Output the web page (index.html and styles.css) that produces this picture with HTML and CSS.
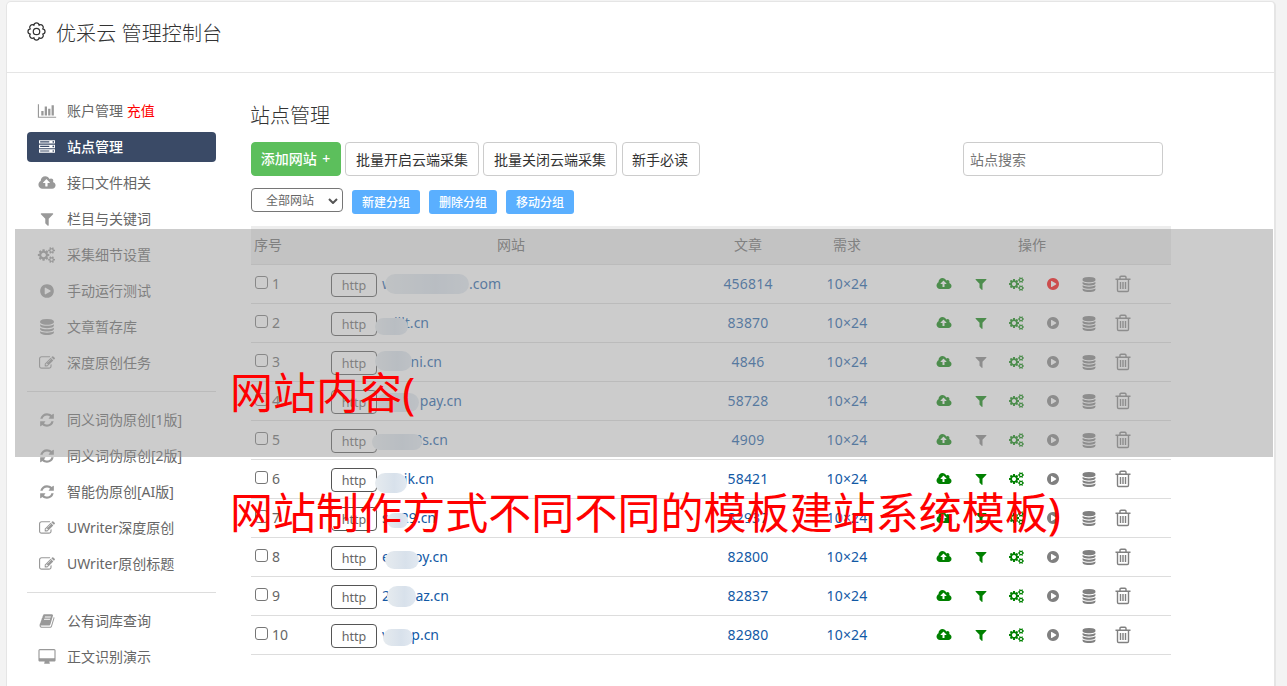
FILE: index.html
```html
<!DOCTYPE html>
<html lang="zh-CN">
<head>
  <meta charset="UTF-8">
  <meta name="viewport" content="width=device-width, initial-scale=1.0">
  <title>优采云 管理控制台</title>
  <link rel="stylesheet" href="styles.css">
</head>
<body>

  <svg class="sprite">
    <symbol id="i-chart" viewBox="0 0 2048 1792"><path d="M640 896v512h-256v-512h256zm384-512v1024h-256v-1024h256zm1024 1152v128h-2048v-1536h128v1408h1920zm-640-896v768h-256v-768h256zm384-384v1152h-256v-1152h256z"/></symbol>
    <symbol id="i-server" viewBox="0 0 1792 1792"><path d="M128 1408h1024v-128h-1024v128zm0-512h1024v-128h-1024v128zm1568 448q0-40-28-68t-68-28-68 28-28 68 28 68 68 28 68-28 28-68zm-1568-960h1024v-128h-1024v128zm1568 448q0-40-28-68t-68-28-68 28-28 68 28 68 68 28 68-28 28-68zm0-512q0-40-28-68t-68-28-68 28-28 68 28 68 68 28 68-28 28-68zm96 832v384h-1792v-384h1792zm0-512v384h-1792v-384h1792zm0-512v384h-1792v-384h1792z"/></symbol>
    <symbol id="i-upload" viewBox="0 0 1920 1792"><path d="M1280 864q0-14-9-23l-352-352q-9-9-23-9t-23 9l-351 351q-10 12-10 24 0 14 9 23t23 9h224v352q0 13 9.5 22.5t22.5 9.5h192q13 0 22.5-9.5t9.5-22.5v-352h224q13 0 22.5-9.5t9.5-22.5zm640 288q0 159-112.5 271.5t-271.5 112.5h-1088q-185 0-316.5-131.5t-131.5-316.5q0-130 70-240t188-165q-2-30-2-43 0-212 150-362t362-150q156 0 285.5 87t188.5 231q71-62 166-62 106 0 181 75t75 181q0 76-41 138 130 31 213.5 135.5t83.5 238.5z"/></symbol>
    <symbol id="i-filter" viewBox="0 0 1792 1792"><path d="M1595 295q17 41-14 70l-493 493v742q0 42-39 59-13 5-25 5-27 0-45-19l-256-256q-19-19-19-45v-486l-493-493q-31-29-14-70 17-39 59-39h1280q42 0 59 39z"/></symbol>
    <symbol id="i-cogs" viewBox="0 0 1920 1792"><path d="M832 896q0-106-75-181t-181-75-181 75-75 181 75 181 181 75 181-75 75-181zm768 512q0-52-38-90t-90-38-90 38-38 90q0 53 37.5 90.5t90.5 37.5 90.5-37.5 37.5-90.5zm0-1024q0-52-38-90t-90-38-90 38-38 90q0 53 37.5 90.5t90.5 37.5 90.5-37.5 37.5-90.5zm-384 421v185q0 10-7 19.5t-16 10.5l-155 24q-11 35-32 76 34 48 90 115 7 11 7 20 0 12-7 19-23 30-82.5 89.5t-78.5 59.5q-11 0-21-7l-115-90q-37 19-77 31-11 108-23 155-7 24-30 24h-186q-11 0-20-7.5t-10-17.5l-23-153q-34-10-75-31l-118 89q-7 7-20 7-11 0-21-8-144-133-144-160 0-9 7-19 10-14 41-53t47-61q-23-44-35-82l-152-24q-10-1-17-9.5t-7-19.5v-185q0-10 7-19.5t16-10.5l155-24q11-35 32-76-34-48-90-115-7-11-7-20 0-12 7-20 22-30 82-89t79-59q11 0 21 7l115 90q34-18 77-32 11-108 23-154 7-24 30-24h186q11 0 20 7.5t10 17.5l23 153q34 10 75 31l118-89q8-7 20-7 11 0 21 8 144 133 144 160 0 8-7 19-12 16-42 54t-45 60q23 48 34 82l152 23q10 2 17 10.5t7 19.5zm640 533v140q0 16-149 31-12 27-30 52 51 113 51 138 0 4-4 7-122 71-124 71-8 0-46-47t-52-68q-20 2-30 2t-30-2q-14 21-52 68t-46 47q-2 0-124-71-4-3-4-7 0-25 51-138-18-25-30-52-149-15-149-31v-140q0-16 149-31 13-29 30-52-51-113-51-138 0-4 4-7 4-2 35-20t59-34 30-16q8 0 46 46.5t52 67.5q20-2 30-2t30 2q51-71 92-112l6-2q4 0 124 70 4 3 4 7 0 25-51 138 17 23 30 52 149 15 149 31zm0-1024v140q0 16-149 31-12 27-30 52 51 113 51 138 0 4-4 7-122 71-124 71-8 0-46-47t-52-68q-20 2-30 2t-30-2q-14 21-52 68t-46 47q-2 0-124-71-4-3-4-7 0-25 51-138-18-25-30-52-149-15-149-31v-140q0-16 149-31 13-29 30-52-51-113-51-138 0-4 4-7 4-2 35-20t59-34 30-16q8 0 46 46.5t52 67.5q20-2 30-2t30 2q51-71 92-112l6-2q4 0 124 70 4 3 4 7 0 25-51 138 17 23 30 52 149 15 149 31z"/></symbol>
    <symbol id="i-play" viewBox="0 0 1792 1792"><path d="M896 128q209 0 385.5 103t279.5 279.5 103 385.5-103 385.5-279.5 279.5-385.5 103-385.5-103-279.5-279.5-103-385.5 103-385.5 279.5-279.5 385.5-103zm384 823q32-18 32-55t-32-55l-544-320q-31-19-64-1-32 19-32 56v640q0 37 32 56 16 8 32 8 17 0 32-9z"/></symbol>
    <symbol id="i-database" viewBox="0 0 1792 1792"><path d="M896 768q237 0 443-43t325-127v170q0 69-103 128t-280 93.5-385 34.5-385-34.5-280-93.5-103-128v-170q119 84 325 127t443 43zm0 768q237 0 443-43t325-127v170q0 69-103 128t-280 93.5-385 34.5-385-34.5-280-93.5-103-128v-170q119 84 325 127t443 43zm0-384q237 0 443-43t325-127v170q0 69-103 128t-280 93.5-385 34.5-385-34.5-280-93.5-103-128v-170q119 84 325 127t443 43zm0-1152q208 0 385 34.5t280 93.5 103 128v128q0 69-103 128t-280 93.5-385 34.5-385-34.5-280-93.5-103-128v-128q0-69 103-128t280-93.5 385-34.5z"/></symbol>
    <symbol id="i-edit" viewBox="0 0 1792 1792"><path d="M888 1184l116-116-152-152-116 116v56h96v96h56zm440-720q-16-16-33 1l-350 350q-17 17-1 33t33-1l350-350q17-17 1-33zm80 594v190q0 119-84.5 203.5t-203.5 84.5h-832q-119 0-203.5-84.5t-84.5-203.5v-832q0-119 84.5-203.5t203.5-84.5h832q63 0 117 25 15 7 18 23 3 17-9 29l-49 49q-14 14-32 8-23-6-45-6h-832q-66 0-113 47t-47 113v832q0 66 47 113t113 47h832q66 0 113-47t47-113v-126q0-13 9-22l64-64q15-15 35-7t20 29zm-96-738l288 288-672 672h-288v-288zm444 132l-92 92-288-288 92-92q28-28 68-28t68 28l152 152q28 28 28 68t-28 68z"/></symbol>
    <symbol id="i-refresh" viewBox="0 0 1792 1792"><path d="M1639 1056q0 5-1 7-64 268-268 434.5t-478 166.5q-146 0-282.5-55t-243.5-157l-129 129q-19 19-45 19t-45-19-19-45v-448q0-26 19-45t45-19h448q26 0 45 19t19 45-19 45l-137 137q71 66 161 102t187 36q134 0 250-65t186-179q11-17 53-117 8-23 30-23h192q13 0 22.5 9.5t9.5 22.5zm25-800v448q0 26-19 45t-45 19h-448q-26 0-45-19t-19-45 19-45l138-138q-148-137-349-137-134 0-250 65t-186 179q-11 17-53 117-8 23-30 23h-199q-13 0-22.5-9.5t-9.5-22.5v-7q65-268 270-434.5t480-166.5q146 0 284 55.5t245 156.5l130-129q19-19 45-19t45 19 19 45z"/></symbol>
    <symbol id="i-book" viewBox="0 0 1792 1792"><path d="M1703 478q40 57 18 129l-275 906q-19 64-76.5 107.5t-122.5 43.5h-923q-77 0-148.5-53.5t-99.5-131.5q-24-67-2-127 0-4 3-27t4-37q1-8-3-21.5t-3-19.5q2-11 8-21t16.5-23.5 16.5-23.5q23-38 45-91.5t30-91.5q3-10 .5-30t-.5-28q3-11 17-28t17-23q21-36 42-92t25-90q1-9-2.5-32t.5-28q4-13 22-30.5t22-22.5q19-26 42.5-84.5t27.5-96.5q1-8-3-25.5t-2-26.5q2-8 9-18t18-23 17-21q8-12 16.5-30.5t15-35 16-36 19.5-32 26.5-23.5 36-11.5 47.5 5.5l-1 3q38-9 51-9h761q74 0 114 56t18 130l-274 906q-36 119-71.5 153.5t-128.5 34.5h-869q-27 0-38 15-11 16-1 43 24 70 144 70h923q29 0 56-15.5t35-41.5l300-987q7-22 5-57 38 15 59 43zm-1064 2q-4 13 2 22.5t20 9.5h608q13 0 25.5-9.5t16.5-22.5l21-64q4-13-2-22.5t-20-9.5h-608q-13 0-25.5 9.5t-16.5 22.5zm-83 256q-4 13 2 22.5t20 9.5h608q13 0 25.5-9.5t16.5-22.5l21-64q4-13-2-22.5t-20-9.5h-608q-13 0-25.5 9.5t-16.5 22.5z"/></symbol>
    <symbol id="i-desktop" viewBox="0 0 2048 1792"><path d="M1856 992v-832q0-13-9.5-22.5t-22.5-9.5h-1600q-13 0-22.5 9.5t-9.5 22.5v832q0 13 9.5 22.5t22.5 9.5h1600q13 0 22.5-9.5t9.5-22.5zm128-832v1088q0 66-47 113t-113 47h-544q0 37 16 77.5t32 71 16 43.5q0 26-19 45t-45 19h-512q-26 0-45-19t-19-45q0-14 16-44t32-70 16-78h-544q-66 0-113-47t-47-113v-1088q0-66 47-113t113-47h1600q66 0 113 47t47 113z"/></symbol>
    <symbol id="i-trash" viewBox="0 0 16 18"><path d="M.5 4.2h15M5 4V2.2Q5 1.2 6 1.2h4q1 0 1 1V4M2.5 4.5v10.8q0 1.2 1.2 1.2h8.6q1.2 0 1.2-1.2V4.5M5.5 7v7M8 7v7M10.5 7v7" fill="none" stroke="currentColor" stroke-width="1.4"/></symbol>
  </svg>

  <div class="panel">
    <header class="panel-header">
      <svg class="gear" viewBox="0 0 20 20"><path d="M16.65 12.76A2.8 2.8 0 0 1 12.76 16.65A2.8 2.8 0 0 1 7.24 16.65A2.8 2.8 0 0 1 3.35 12.76A2.8 2.8 0 0 1 3.35 7.24A2.8 2.8 0 0 1 7.24 3.35A2.8 2.8 0 0 1 12.76 3.35A2.8 2.8 0 0 1 16.65 7.24A2.8 2.8 0 0 1 16.65 12.76z"/><circle cx="10" cy="10" r="3.4"/></svg>
      <h1>优采云 管理控制台</h1>
    </header>

    <div class="panel-body">
      <nav class="sidebar">
        <a><svg><use href="#i-chart"/></svg><span>账户管理 <em>充值</em></span></a>
        <a class="active"><svg><use href="#i-server"/></svg>站点管理</a>
        <a><svg><use href="#i-upload"/></svg>接口文件相关</a>
        <a><svg><use href="#i-filter"/></svg>栏目与关键词</a>
        <a><svg><use href="#i-cogs"/></svg>采集细节设置</a>
        <a><svg><use href="#i-play"/></svg>手动运行测试</a>
        <a><svg><use href="#i-database"/></svg>文章暂存库</a>
        <a><svg><use href="#i-edit"/></svg>深度原创任务</a>
        <hr>
        <a><svg><use href="#i-refresh"/></svg>同义词伪原创[1版]</a>
        <a><svg><use href="#i-refresh"/></svg>同义词伪原创[2版]</a>
        <a><svg><use href="#i-refresh"/></svg>智能伪原创[AI版]</a>
        <a><svg><use href="#i-edit"/></svg>UWriter深度原创</a>
        <a><svg><use href="#i-edit"/></svg>UWriter原创标题</a>
        <hr>
        <a><svg><use href="#i-book"/></svg>公有词库查询</a>
        <a><svg><use href="#i-desktop"/></svg>正文识别演示</a>
      </nav>

      <main class="content">
        <h2>站点管理</h2>
        <div class="toolbar">
          <button class="btn btn-add">添加网站 +</button>
          <button class="btn btn-wide">批量开启云端采集</button>
          <button class="btn btn-wide">批量关闭云端采集</button>
          <button class="btn btn-help">新手必读</button>
          <input class="search" type="text" placeholder="站点搜索">
        </div>
        <div class="groups">
          <div class="select">全部网站<svg viewBox="0 0 10 6"><path d="M1 1l4 4 4-4"/></svg></div>
          <button class="btn-group">新建分组</button>
          <button class="btn-group">删除分组</button>
          <button class="btn-group">移动分组</button>
        </div>

        <table>
          <thead>
            <tr>
              <th class="col-no">序号</th>
              <th class="col-site">网站</th>
              <th class="col-count">文章</th>
              <th class="col-need">需求</th>
              <th class="col-ops">操作</th>
            </tr>
          </thead>
          <tbody id="sites"></tbody>
        </table>
      </main>
    </div>
  </div>

  <div class="mask"></div>
  <div class="caption caption-1">网站内容(</div>
  <div class="caption caption-2">网站制作方式不同不同的模板建站系统模板)</div>

  <script>
    // width: domain width, blur: [left, top, width, height] inside the cell
    const sites = [
      { head: 'w', tail: '.com', width: 119, count: 456814, blur: [58, 9, 84, 20], running: true },
      { head: '', tail: 'illt.cn', width: 47, count: 83870, blur: [48, 14, 33, 17] },
      { head: '', tail: 'ni.cn', width: 60, count: 4846, blur: [48, 8, 37, 20], noFilter: true },
      { head: '', tail: 'pay.cn', width: 80, count: 58728, blur: [50, 11, 42, 19] },
      { head: '', tail: '8s.cn', width: 66, count: 4909, blur: [45, 13, 50, 16], noFilter: true },
      { head: '', tail: 'ik.cn', width: 52, count: 58421, blur: [48, 13, 32, 20] },
      { head: 's', tail: '29.cn', width: 54, count: 82937, blur: [60, 14, 21, 15] },
      { head: 'e', tail: 'oy.cn', width: 66, count: 82800, blur: [58, 13, 34, 18] },
      { head: '2', tail: 'az.cn', width: 67, count: 82837, blur: [60, 9, 29, 21] },
      { head: 'v', tail: 'p.cn', width: 57, count: 82980, blur: [56, 13, 30, 17] }
    ];

    function icon(name, cls) {
      return `<svg class="${cls}"><use href="#i-${name}"/></svg>`;
    }

    document.getElementById('sites').innerHTML = sites.map((s, i) => {
      const [x, y, w, h] = s.blur;
      return `<tr>
        <td><label class="pick"><input type="checkbox">${i + 1}</label></td>
        <td><div class="site">
          <button class="btn-http">http</button>
          <a class="domain" style="width:${s.width}px"><span>${s.head}</span><span>${s.tail}</span></a>
          <i class="blur" style="left:${x}px;top:${y}px;width:${w}px;height:${h}px"></i>
        </div></td>
        <td class="num">${s.count}</td>
        <td class="num">10×24</td>
        <td><div class="ops">
          ${icon('upload', 'on')}${icon('filter', s.noFilter ? '' : 'on')}${icon('cogs', 'on')}
          ${icon('play', s.running ? 'run' : '')}${icon('database', 'db')}${icon('trash', 'trash')}
        </div></td>
      </tr>`;
    }).join('');
  </script>
</body>
</html>
```
FILE: styles.css
```css
* {
  margin: 0;
  padding: 0;
  box-sizing: border-box;
}

body {
  height: 686px;
  overflow: hidden;
  background: #f3f3f3;
  color: #666;
  font: 14px/20px "Noto Sans", "Noto Sans CJK SC", sans-serif;
}

svg {
  fill: currentColor;
}

button,
input {
  font-family: inherit;
}

.sprite {
  display: none;
}

.panel {
  height: 700px;
  margin: 1px 11px 0 6px;
  background: #fff;
  border: 1px solid #e5e5e5;
  border-right-width: 2px;
  border-radius: 5px;
}

.panel-header {
  display: flex;
  height: 71px;
  padding: 17px 20px 0;
  border-bottom: 1px solid #e5e5e5;
  color: #333;
}

.gear {
  width: 19px;
  height: 19px;
  margin: 3px 10px 0 0;
  fill: none;
  stroke: #333;
  stroke-width: 1.3;
}

h1,
h2 {
  color: #333;
  font-size: 20px;
  font-weight: 300;
  line-height: 30px;
}

h1 {
  letter-spacing: .1px;
}

h2 {
  margin-left: -1px;
}

.panel-body {
  display: flex;
  gap: 35px;
  padding: 23px 20px 0;
}

/* sidebar */
.sidebar {
  display: flex;
  flex-direction: column;
  flex: none;
  gap: 6px;
  width: 189px;
}

.sidebar a {
  display: flex;
  align-items: center;
  gap: 10px;
  height: 30px;
  padding-left: 10px;
  border-radius: 4px;
}

.sidebar svg {
  width: 20px;
  height: 16px;
  color: #999;
}

.sidebar em {
  color: #f00;
  font-style: normal;
}

.sidebar .active,
.sidebar .active svg {
  color: #fff;
}

.sidebar .active {
  background: #3a4a66;
  font-weight: 500;
}

.sidebar hr {
  height: 1px;
  margin: 7px 0;
  border: 0;
  background: #ddd;
}

/* content */
.content {
  width: 920px;
  padding-top: 5px;
}

.toolbar {
  display: flex;
  gap: 4px;
  margin-top: 11px;
}

.btn {
  height: 34px;
  border: 1px solid #ccc;
  border-radius: 4px;
  background: #fff;
  color: #333;
  font-size: 14px;
}

.btn-add {
  width: 90px;
  padding: 0 1px 2px 0;
  border-color: #5cbf5c;
  background: #5cbf5c;
  color: #fff;
  font-weight: 500;
  word-spacing: 2px;
}

.btn-wide {
  width: 134px;
}

.btn-help {
  width: 78px;
  margin-left: 1px;
  padding-right: 2px;
}

.search {
  width: 200px;
  height: 34px;
  margin: 0 8px 0 auto;
  padding: 0 6px;
  border: 1px solid #ccc;
  border-radius: 4px;
  font-size: 14px;
}

.search::placeholder {
  color: #757575;
}

.groups {
  display: flex;
  align-items: flex-end;
  gap: 9px;
  height: 38px;
}

.select {
  display: flex;
  align-items: center;
  justify-content: space-between;
  width: 92px;
  height: 24px;
  margin-bottom: 2px;
  padding: 1px 4px 0 14px;
  border: 1px solid #767676;
  border-radius: 4px;
  font-size: 12px;
}

.select svg {
  width: 10px;
  height: 6px;
  fill: none;
  stroke: #555;
  stroke-width: 2;
}

.btn-group {
  width: 68px;
  height: 24px;
  border: 0;
  border-radius: 3px;
  background: #5aafff;
  color: #fff;
  font-size: 12px;
  font-weight: 500;
}

table {
  width: 920px;
  margin-top: 12px;
  border-collapse: separate;
  border-spacing: 0;
  table-layout: fixed;
}

th,
td {
  height: 39px;
  border-bottom: 1px solid #ddd;
}

th {
  background: #ededed;
  font-weight: 400;
}

.col-no {
  width: 76px;
  padding-left: 3px;
  text-align: left;
}

.col-site {
  width: 368px;
}

.col-count {
  width: 106px;
}

.col-need {
  width: 92px;
}

.col-ops {
  width: 278px;
}

.pick {
  display: flex;
  align-items: center;
  gap: 4px;
  padding-left: 4px;
}

.pick input {
  width: 13px;
  height: 13px;
  margin-top: -3px;
  appearance: none;
  border: 1px solid #767676;
  border-radius: 3px;
}

.site {
  position: relative;
  display: flex;
  align-items: center;
  height: 38px;
  padding-left: 4px;
}

.btn-http {
  width: 46px;
  height: 24px;
  margin: 1px 5px 0 0;
  padding-top: 2px;
  border: 1px solid #555;
  border-radius: 4px;
  background: transparent;
  color: #666;
  font-size: 12.5px;
  line-height: 20px;
}

.domain,
.num {
  color: #1259a5;
}

.domain {
  display: flex;
  justify-content: space-between;
}

.num {
  letter-spacing: .2px;
  text-align: center;
}

.blur {
  position: absolute;
  border-radius: 10px;
  background: linear-gradient(90deg, #e6ebef, #d8e1eb 60%, #e2e9f1);
}

.ops {
  display: grid;
  grid-template-columns: repeat(6, 36px);
  align-items: center;
  justify-items: center;
  padding-left: 33px;
  color: #808080;
}

.ops svg {
  width: 18px;
  height: 14px;
}

.ops svg:nth-child(n+2) {
  margin-left: 1px;
}

.ops .on {
  color: #008000;
}

.ops .run {
  color: #f00;
}

.ops .db {
  height: 15px;
}

.ops svg.trash {
  width: 16px;
  height: 18px;
  margin: 0 2px 0 0;
}

/* grey band and red captions over the page */
.mask {
  position: absolute;
  left: 15px;
  top: 229px;
  width: 1258px;
  height: 228px;
  background: rgba(153, 153, 153, .5);
}

.caption {
  position: absolute;
  left: 230px;
  color: #f00;
  font-size: 43px;
  line-height: 60px;
  letter-spacing: .05px;
  white-space: nowrap;
}

.caption-1 {
  top: 363px;
}

.caption-2 {
  top: 483px;
}
```
